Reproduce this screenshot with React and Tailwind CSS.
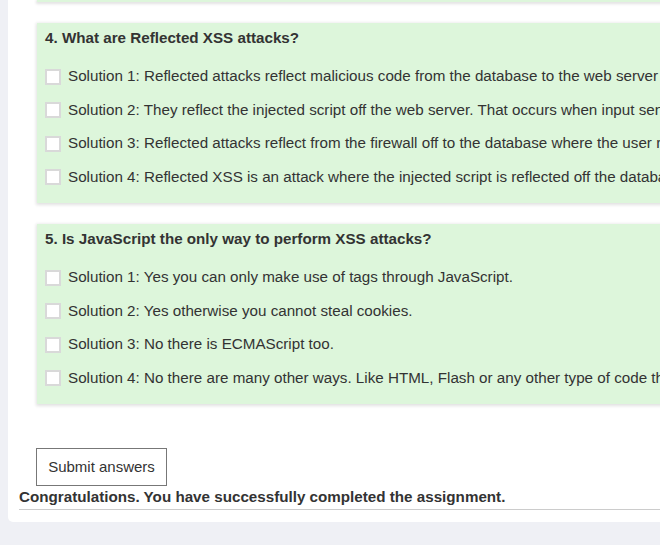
// Quiz results panel: two answered questions, submit button and the success line.

const questions = [
  {
    title: '4. What are Reflected XSS attacks?',
    solutions: [
      'Solution 1: Reflected attacks reflect malicious code from the database to the web server and then reflect it back to the user.',
      'Solution 2: They reflect the injected script off the web server. That occurs when input sent to the web server is part of the request.',
      'Solution 3: Reflected attacks reflect from the firewall off to the database where the user requests information from.',
      'Solution 4: Reflected XSS is an attack where the injected script is reflected off the database and web server to the user.',
    ],
  },
  {
    title: '5. Is JavaScript the only way to perform XSS attacks?',
    solutions: [
      'Solution 1: Yes you can only make use of tags through JavaScript.',
      'Solution 2: Yes otherwise you cannot steal cookies.',
      'Solution 3: No there is ECMAScript too.',
      'Solution 4: No there are many other ways. Like HTML, Flash or any other type of code that the browser executes.',
    ],
  },
];

function Question({ title, solutions }) {
  return (
    <div className="bg-[#ddf6db] shadow-[0_1px_3px_1px_#e2e2e2] pt-[5px] pb-[9px] pl-[8px]">
      <p className="font-bold leading-[20px]">{title}</p>
      <div className="mt-[12px]">
        {solutions.map((s) => (
          <div key={s} className="flex items-center h-[33.5px]">
            <span className="w-4 h-4 bg-white border-2 border-[#d9d9d9] shrink-0" />
            <span className="ml-[7px] whitespace-nowrap">{s}</span>
          </div>
        ))}
      </div>
    </div>
  );
}

export default function App() {
  return (
    <div
      className="w-[660px] h-[545px] overflow-hidden bg-[#eff0f5] text-[#333] text-[15.2px]"
      style={{ fontFamily: '"Liberation Sans", Arial, sans-serif' }}
    >
      <div className="ml-[8px] w-[800px] bg-white rounded-b-[5px] h-[522px]">
        <div className="pl-[29px]">
          <div className="h-[2px] bg-[#ddf6db] shadow-[0_1px_3px_1px_#e2e2e2]" />
          <div className="mt-[21px] flex flex-col gap-[21px]">
            {questions.map((q) => (
              <Question key={q.title} {...q} />
            ))}
          </div>
        </div>
        <div className="pl-[28px] mt-[44px]">
          <button className="h-[38px] w-[131px] border border-[#777] bg-white text-[15px] text-[#333]">
            Submit answers
          </button>
        </div>
        <div className="pl-[11px] pt-[1px]">
          <p className="font-bold leading-[20px]">
            Congratulations. You have successfully completed the assignment.
          </p>
          <div className="mt-[2px] border-t border-[#cccccc]" />
        </div>
      </div>
    </div>
  );
}
